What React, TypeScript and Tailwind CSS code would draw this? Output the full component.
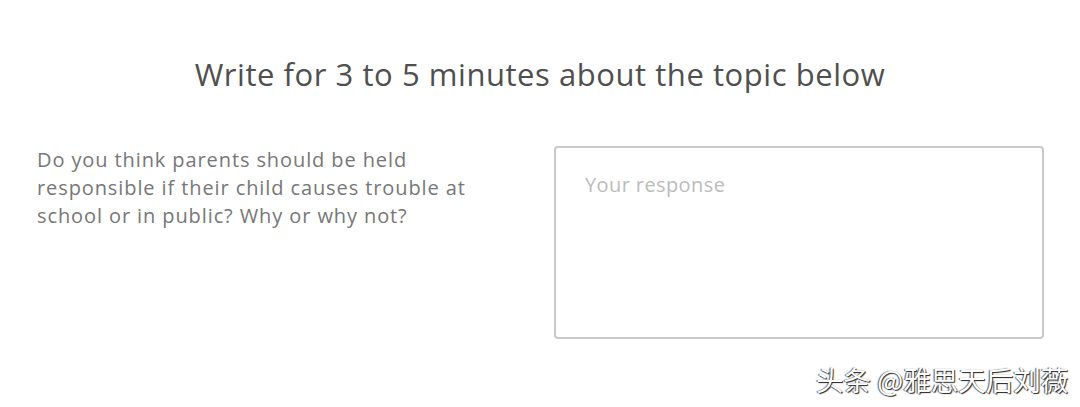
export default function App() {
  return (
    <div className="relative h-[407px] w-[1080px] overflow-hidden bg-white font-['Open_Sans',sans-serif]">
      <h1 className="pt-[54px] text-center text-[31px] leading-[40px] tracking-[0.55px] text-[#4f4f4f]">
        Write for 3 to 5 minutes about the topic below
      </h1>
      <div className="mt-[52px] flex items-start">
        <p className="ml-[37px] w-[470px] text-[20px] leading-[28px] tracking-[0.9px] text-[#777777]">
          Do you think parents should be held
          <br />
          responsible if their child causes trouble at
          <br />
          school or in public? Why or why not?
        </p>
        <div className="ml-[47px] h-[193px] w-[490px] rounded-[4px] border-2 border-[#c9c9c9] px-[29px] pt-[23px]">
          <div className="text-[20px] leading-[28px] tracking-[0.4px] text-[#bcbcbc]">Your response</div>
        </div>
      </div>
      <div className="absolute left-[816px] top-[361px] font-['Noto_Sans_CJK_SC',sans-serif] text-[27.5px] leading-[36px] text-white [text-shadow:1px_1px_1px_#222,-1px_0_1px_#555]">
        头条 @雅思天后刘薇
      </div>
    </div>
  );
}
